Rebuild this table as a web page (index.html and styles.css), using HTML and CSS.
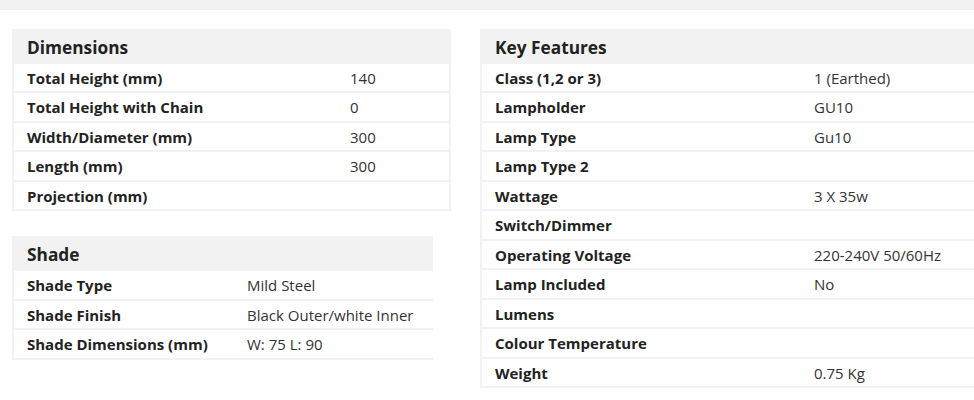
FILE: index.html
```html
<!DOCTYPE html>
<html lang="en">
<head>
<meta charset="utf-8">
<title>Specifications</title>
<link rel="stylesheet" href="styles.css">
</head>
<body>
<div class="topbar"></div>
<div class="specs">
  <div class="col-left">
    <div class="box box-dim">
      <div class="box-head">Dimensions</div>
      <table class="spec spec-dim">
        <tr><th>Total Height (mm)</th><td>140</td></tr>
        <tr><th>Total Height with Chain</th><td>0</td></tr>
        <tr><th>Width/Diameter (mm)</th><td>300</td></tr>
        <tr><th>Length (mm)</th><td>300</td></tr>
        <tr><th>Projection (mm)</th><td></td></tr>
      </table>
    </div>
    <div class="box box-shade">
      <div class="box-head">Shade</div>
      <table class="spec spec-shade">
        <tr><th>Shade Type</th><td>Mild Steel</td></tr>
        <tr><th>Shade Finish</th><td>Black Outer/white Inner</td></tr>
        <tr><th>Shade Dimensions (mm)</th><td>W: 75 L: 90</td></tr>
      </table>
    </div>
  </div>
  <div class="col-right">
    <div class="box box-key">
      <div class="box-head">Key Features</div>
      <table class="spec spec-key">
        <tr><th>Class (1,2 or 3)</th><td>1 (Earthed)</td></tr>
        <tr><th>Lampholder</th><td>GU10</td></tr>
        <tr><th>Lamp Type</th><td>Gu10</td></tr>
        <tr><th>Lamp Type 2</th><td></td></tr>
        <tr><th>Wattage</th><td>3 X 35w</td></tr>
        <tr><th>Switch/Dimmer</th><td></td></tr>
        <tr><th>Operating Voltage</th><td>220-240V 50/60Hz</td></tr>
        <tr><th>Lamp Included</th><td>No</td></tr>
        <tr><th>Lumens</th><td></td></tr>
        <tr><th>Colour Temperature</th><td></td></tr>
        <tr><th>Weight</th><td>0.75 Kg</td></tr>
      </table>
    </div>
  </div>
</div>
</body>
</html>
```
FILE: styles.css
```css
html, body {
  margin: 0;
  padding: 0;
  background: #ffffff;
  overflow: hidden;
}
body {
  font-family: "Open Sans", "Liberation Sans", sans-serif;
  color: #222;
  width: 974px;
  height: 400px;
}
.topbar {
  height: 10px;
  background: #f2f2f2;
}
.specs {
  display: flex;
  align-items: flex-start;
  padding: 19px 0 0 12px;
  gap: 29px;
}
.col-left {
  width: 439px;
  display: flex;
  flex-direction: column;
  gap: 25px;
  flex: none;
}
.col-right {
  flex: none;
  width: 520px;
}
.box {
  border: 2px solid #f2f2f2;
  background: #fff;
}
.box-shade {
  width: 419px;
  border-right: none;
}
.box-head {
  background: #f2f2f2;
  font-weight: 700;
  font-size: 17.3px;
  line-height: 23px;
  padding: 5px 13px 5px;
  color: #222;
}
.spec {
  border-collapse: collapse;
  table-layout: fixed;
  width: 100%;
}
.spec th,
.spec td {
  text-align: left;
  padding: 5px 13px 3px;
  line-height: 19.45px;
  height: 19.45px;
  font-size: 15px;
  vertical-align: middle;
  border-top: 2px solid #f2f2f2;
}
.spec tr:first-child th,
.spec tr:first-child td {
  border-top: none;
}
.spec th {
  font-weight: 700;
  color: #222;
}
.spec td {
  font-weight: 400;
  color: #333;
}
.spec-dim th { width: 297px; }
.spec-shade th { width: 194px; }
.spec-key th { width: 293px; }
```
